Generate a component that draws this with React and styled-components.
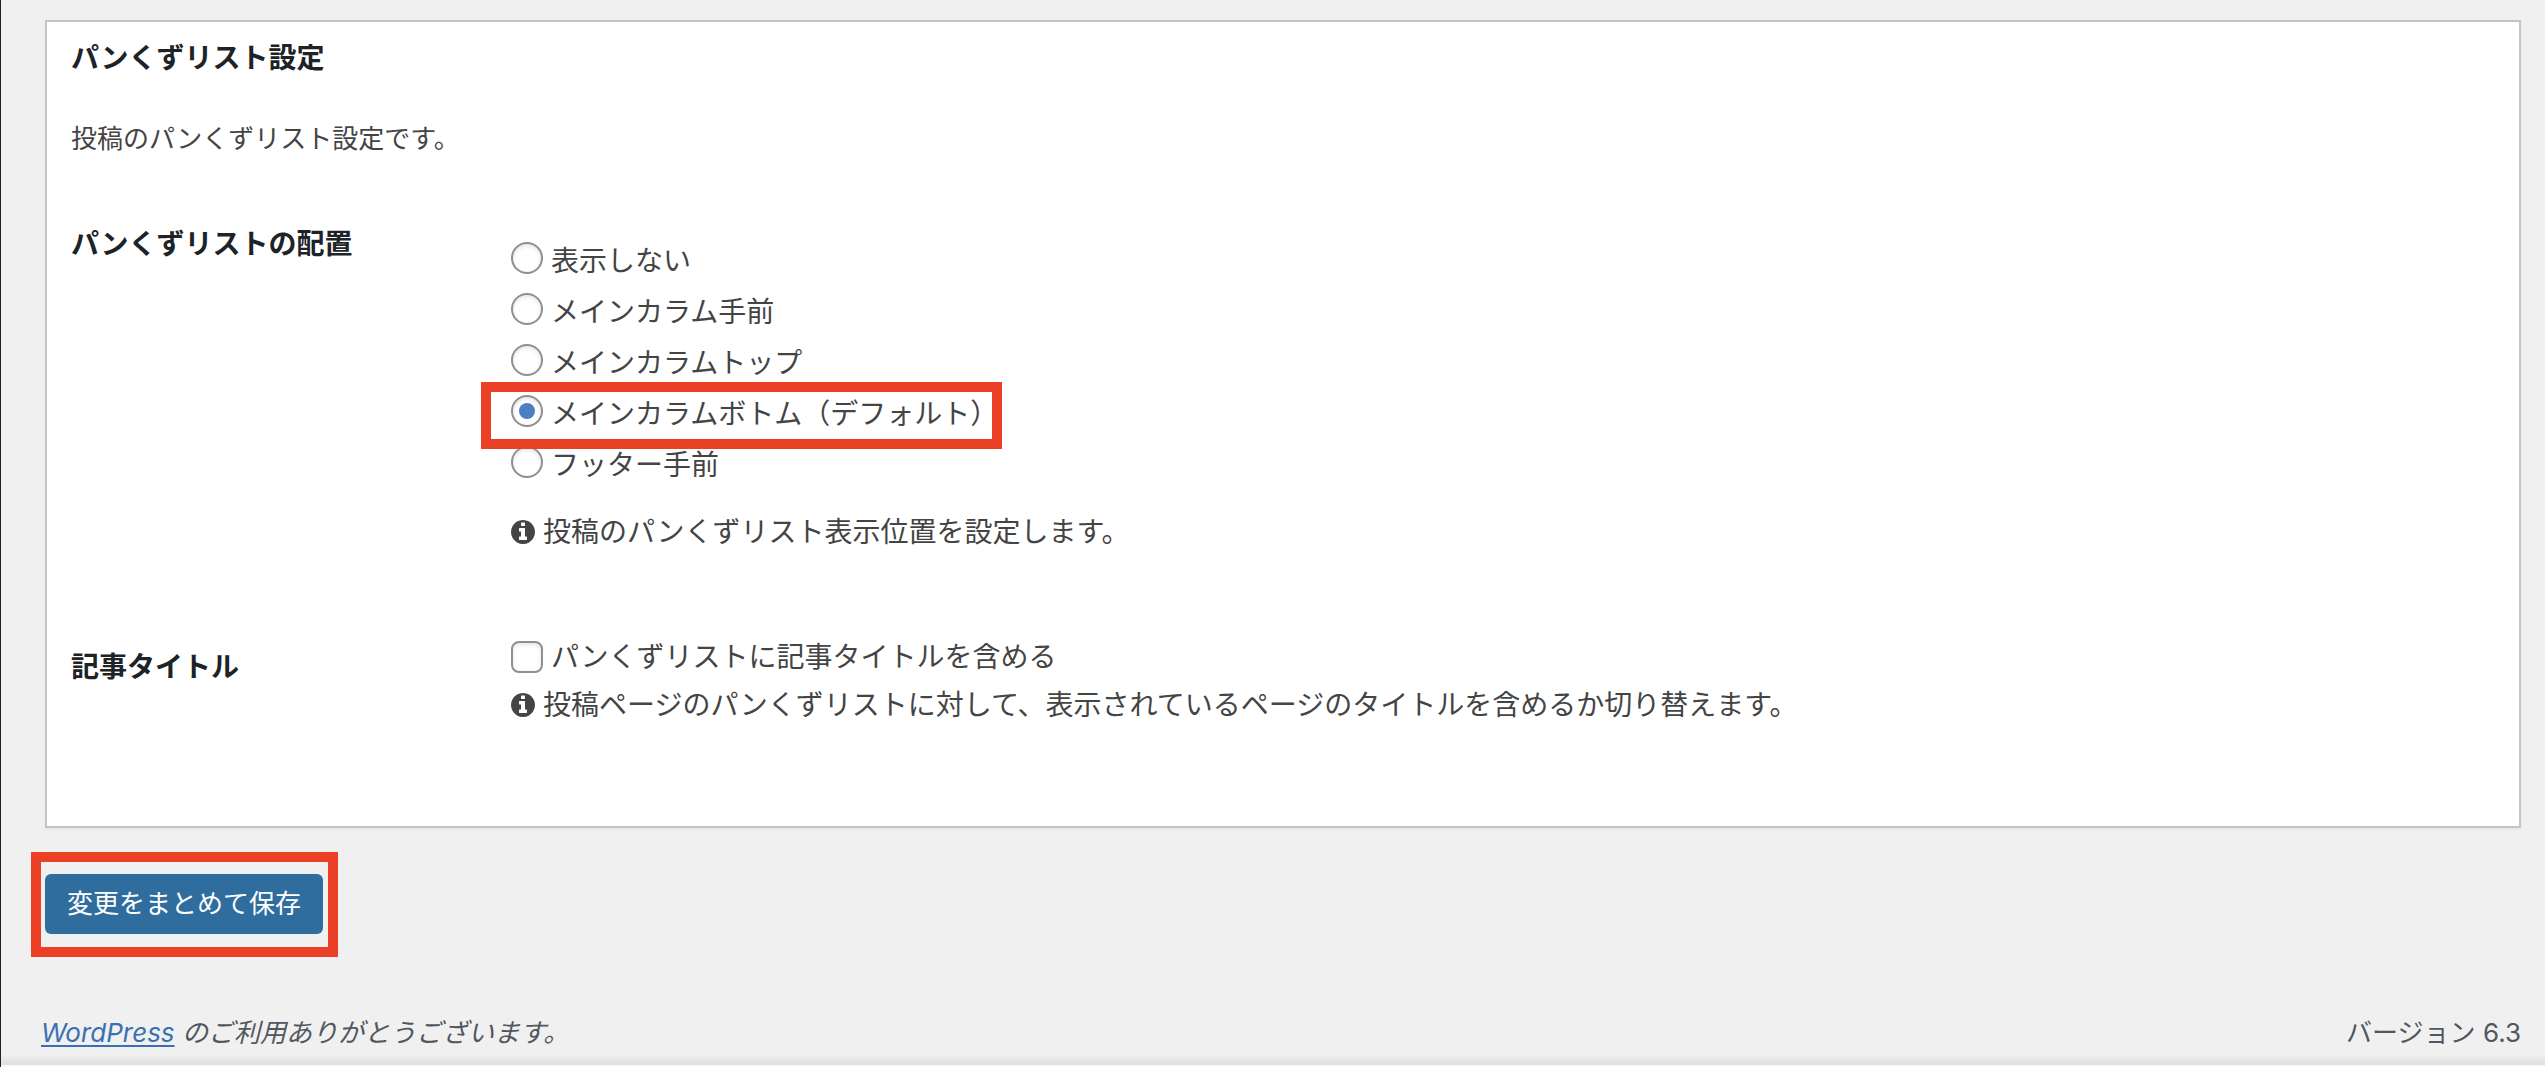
import React, { useState } from "react";
import styled, { createGlobalStyle } from "styled-components";

const GlobalStyle = createGlobalStyle`
  * {
    box-sizing: border-box;
  }
  body {
    margin: 0;
    background: #f0f0f0;
    color: #444;
    font-family: Inter, "Noto Sans CJK JP", sans-serif;
    font-size: 28px;
    line-height: 40px;
  }
`;

const Page = styled.div`
  display: flex;
  flex-direction: column;
  min-height: 100vh;
  border-left: 1px solid #1d2327;
`;

const Content = styled.form`
  padding: 20px 24px 0 44px;
`;

const Panel = styled.section`
  padding: 16px 24px 98px;
  border: 2px solid #c3c4c7;
  background: #fff;
  box-shadow: 0 2px 2px rgba(0, 0, 0, 0.04);
`;

const PanelTitle = styled.h2`
  margin: 0;
  color: #1d2327;
  font-size: 28px;
  font-weight: 700;
`;

const Description = styled.p`
  margin: 41px 0 50px;
  font-size: 26px;
`;

const SettingRow = styled.div`
  display: grid;
  grid-template-columns: 440px 1fr;

  & + & {
    margin-top: 77px;
  }
`;

const SettingName = styled.h3`
  margin: 0;
  padding-top: 15px;
  color: #1d2327;
  font-size: 28px;
  font-weight: 700;
`;

const OptionGroup = styled.div`
  display: flex;
  flex-direction: column;
  align-items: flex-start;
  padding-top: 23px;
`;

const Option = styled.label`
  position: relative;
  display: flex;
  align-items: center;
  gap: 8px;
  height: 51px;
`;

const OptionText = styled.span`
  padding-top: 6px;
`;

const CheckOption = styled(Option)`
  height: 50px;
`;

const Tick = styled.input`
  appearance: none;
  display: grid;
  place-items: center;
  flex: none;
  width: 32px;
  height: 32px;
  margin: 0;
  border: 2px solid #8c8f94;
  border-radius: ${(p) => (p.type === "radio" ? "50%" : "8px")};
  background: #fff;
  box-shadow: inset 0 2px 4px rgba(0, 0, 0, 0.1);

  &:checked::before {
    content: "";
    width: 16px;
    height: 16px;
    border-radius: 50%;
    background: #4a80c2;
  }
`;

const Hint = styled.p`
  display: flex;
  align-items: center;
  gap: 8px;
  margin: ${(p) => (p.$spaced ? "22px" : "0")} 0 0;
  line-height: 46px;
`;

const InfoSvg = styled.svg`
  flex: none;
  width: 24px;
  height: 24px;
  fill: currentColor;
`;

const Ring = styled.span`
  position: absolute;
  z-index: 1;
  inset: ${(p) => p.$inset};
  border: 10px solid #eb4026;
  pointer-events: none;
`;

const SaveArea = styled.div`
  position: relative;
  width: fit-content;
  margin-top: 46px;
`;

const SaveButton = styled.button`
  display: block;
  height: 60px;
  padding: 0 22px;
  border: 0;
  border-radius: 6px;
  background: #2f6d9e;
  color: #fff;
  font-family: inherit;
  font-size: 26px;
  line-height: 40px;
`;

const Footer = styled.footer`
  display: flex;
  justify-content: space-between;
  padding: 79px 24px 0 40px;
  color: #50575e;
  font-size: 26px;
`;

const Thanks = styled.em`
  a {
    color: #3a70b2;
    text-decoration-thickness: 2px;
    text-underline-offset: 3px;
  }
`;

const BottomEdge = styled.div`
  height: 12px;
  margin-top: auto;
  border-bottom: 2px solid #fafafa;
  background: linear-gradient(#f0f0f0, #dedede);
`;

const InfoIcon = () => (
  <InfoSvg viewBox="0 128 1536 1536" aria-hidden="true">
    <path d="M1024 1376v-160q0-14-9-23t-23-9h-96v-512q0-14-9-23t-23-9h-320q-14 0-23 9t-9 23v160q0 14 9 23t23 9h96v320h-96q-14 0-23 9t-9 23v160q0 14 9 23t23 9h448q14 0 23-9t9-23zm-128-896v-160q0-14-9-23t-23-9h-192q-14 0-23 9t-9 23v160q0 14 9 23t23 9h192q14 0 23-9t9-23zm640 416q0 209-103 385.5t-279.5 279.5-385.5 103-385.5-103-279.5-279.5-103-385.5 103-385.5 279.5-279.5 385.5-103 385.5 103 279.5 279.5 103 385.5z" />
  </InfoSvg>
);

const positions = [
  "表示しない",
  "メインカラム手前",
  "メインカラムトップ",
  "メインカラムボトム（デフォルト）",
  "フッター手前",
];
const defaultPosition = positions[3];

export default function App() {
  const [position, setPosition] = useState(defaultPosition);

  return (
    <>
      <GlobalStyle />
      <Page>
        <Content onSubmit={(e) => e.preventDefault()}>
          <Panel>
            <PanelTitle>パンくずリスト設定</PanelTitle>
            <Description>投稿のパンくずリスト設定です。</Description>

            <SettingRow>
              <SettingName id="position-name">パンくずリストの配置</SettingName>
              <div>
                <OptionGroup role="radiogroup" aria-labelledby="position-name">
                  {positions.map((name) => (
                    <Option key={name}>
                      <Tick
                        type="radio"
                        name="position"
                        checked={position === name}
                        onChange={() => setPosition(name)}
                      />
                      <OptionText>{name}</OptionText>
                      {name === defaultPosition && <Ring $inset="-3px -4px -13px -30px" />}
                    </Option>
                  ))}
                </OptionGroup>
                <Hint $spaced>
                  <InfoIcon />
                  投稿のパンくずリスト表示位置を設定します。
                </Hint>
              </div>
            </SettingRow>

            <SettingRow>
              <SettingName>記事タイトル</SettingName>
              <div>
                <CheckOption>
                  <Tick type="checkbox" name="include-title" />
                  パンくずリストに記事タイトルを含める
                </CheckOption>
                <Hint>
                  <InfoIcon />
                  投稿ページのパンくずリストに対して、表示されているページのタイトルを含めるか切り替えます。
                </Hint>
              </div>
            </SettingRow>
          </Panel>

          <SaveArea>
            <SaveButton type="submit">変更をまとめて保存</SaveButton>
            <Ring $inset="-22px -15px -23px -14px" />
          </SaveArea>
        </Content>

        <Footer>
          <Thanks>
            <a href="#wordpress">WordPress</a> のご利用ありがとうございます。
          </Thanks>
          <span>バージョン 6.3</span>
        </Footer>
        <BottomEdge />
      </Page>
    </>
  );
}
